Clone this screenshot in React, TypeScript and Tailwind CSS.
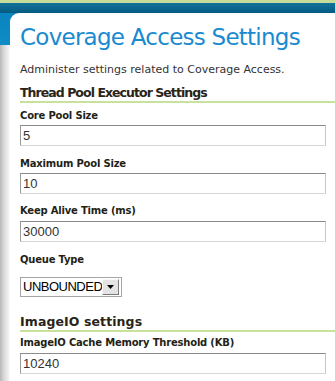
import React from "react";

const labelCls =
  "block text-[10px] font-bold leading-[14px] tracking-[-0.2px] text-[#231f17]";
const inputCls =
  "box-border h-[21px] w-[306px] border border-[#a9a9a9] border-t-[#8a8a8a] border-l-[#9c9c9c] border-b-[#d6d6d6] border-r-[#c6c6c6] bg-white pl-[2px] font-['Liberation_Sans',Arial,sans-serif] text-[13px] leading-[19px] text-[#333333]";
const headCls =
  "-mr-[9px] border-b-2 border-[#c8e29c] text-[12.5px] font-bold leading-[17px] text-[#2a2418]";

export default function App() {
  return (
    <div className="h-[381px] w-[335px] overflow-hidden bg-white font-['DejaVu_Sans',sans-serif]">
      <div className="h-[3px] bg-[#c6dc98]" />
      <div className="h-[378px] bg-[image:linear-gradient(to_bottom,#14739c_0px,#045a80_10px,#0a84bf_10px,#0e8cc6_42px,transparent_42px),linear-gradient(to_right,#b8b8b8,#d9d9d9_4px,#f3f3f3_9px,#ffffff_10px)] pl-[10px] pt-[10px]">
        <div className="h-full rounded-tl-[9px] bg-white pl-[10px] pr-[9px] pt-[10px]">
          <h1 className="text-[23px] leading-[28px] tracking-[-0.75px] text-[#1a8ad0]">
            Coverage Access Settings
          </h1>
          <p className="mt-[12px] text-[11px] leading-[14px] text-[#333333]">
            Administer settings related to Coverage Access.
          </p>
          <h2 className={`mt-[7px] tracking-[-0.95px] ${headCls}`}>
            Thread Pool Executor Settings
          </h2>

          <label className={`mt-[6px] ${labelCls}`}>Core Pool Size</label>
          <div className={`mt-[2px] ${inputCls}`}>5</div>

          <label className={`mt-[11px] ${labelCls}`}>Maximum Pool Size</label>
          <div className={`mt-[2px] ${inputCls}`}>10</div>

          <label className={`mt-[10px] ${labelCls}`}>Keep Alive Time (ms)</label>
          <div className={`mt-[3px] ${inputCls}`}>30000</div>

          <label className={`mt-[11px] ${labelCls}`}>Queue Type</label>
          <div className="mt-[10px] box-border flex h-[20px] w-[102px] items-center border border-[#a5a5a5] bg-white pl-[2px] pr-[2px]">
            <span className="flex-1 font-['Liberation_Sans',Arial,sans-serif] text-[13px] leading-[16px] tracking-[-0.5px] text-black">
              UNBOUNDED
            </span>
            <span className="box-border flex h-[16px] w-[17px] items-center justify-center border border-[#f8f8f8] border-b-[#7a7a7a] border-r-[#7a7a7a] bg-[#e4e4e4]">
              <svg width="7" height="4" viewBox="0 0 7 4">
                <polygon points="0,0 7,0 3.5,4" fill="#000" />
              </svg>
            </span>
          </div>

          <h2 className={`mt-[16px] tracking-[0.1px] ${headCls}`}>ImageIO settings</h2>
          <label className={`mt-[4px] ${labelCls}`}>ImageIO Cache Memory Threshold (KB)</label>
          <div className={`mt-[3px] ${inputCls}`}>10240</div>
        </div>
      </div>
    </div>
  );
}
